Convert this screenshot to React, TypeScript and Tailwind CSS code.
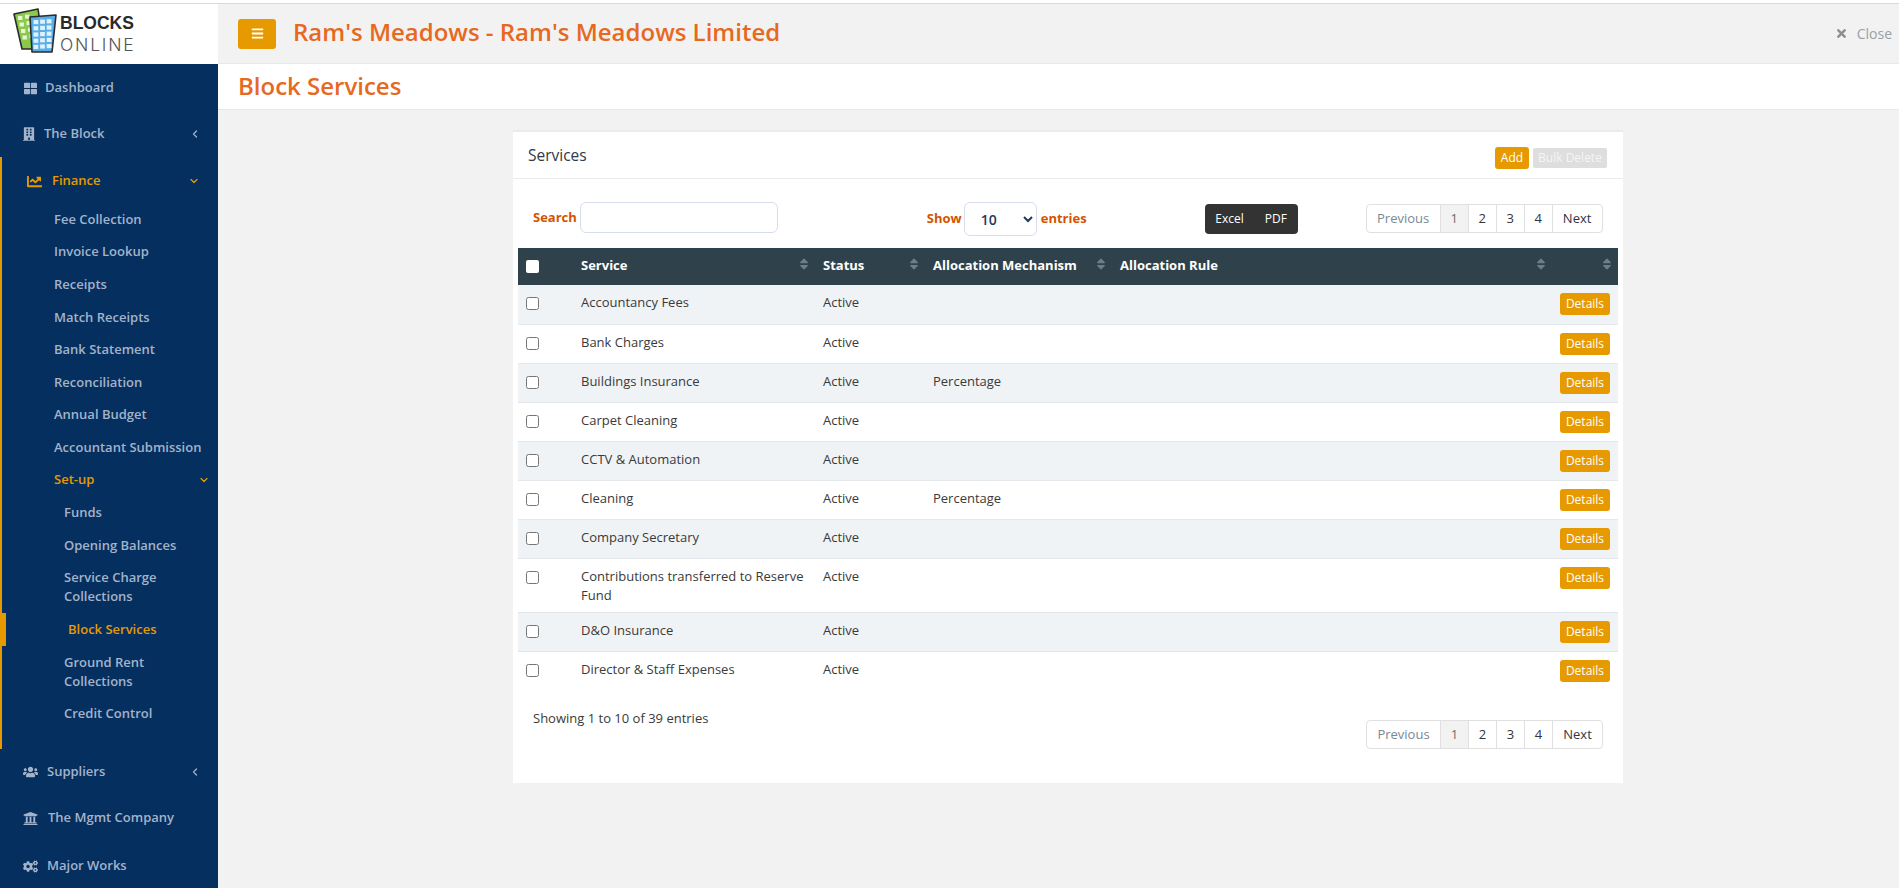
import React from "react";
import { FaThLarge, FaBuilding, FaChartLine, FaUsers, FaUniversity, FaCogs, FaTimes, FaBars, FaSort } from "react-icons/fa";
import { ChevronLeft, ChevronDown } from "lucide-react";

const font = { fontFamily: '"Open Sans", "Liberation Sans", sans-serif' };

function Logo() {
  return (
    <div className="flex items-center h-[60px] w-[218px] bg-white pl-[13px]">
      <svg width="46" height="46" viewBox="0 0 46 46" className="shrink-0 mb-[6px]">
        <polygon points="1,6 25,1 27,14 20,41 9,41" fill="#8bc94a" stroke="#2b2b2b" strokeWidth="1.6" strokeLinejoin="round" />
        {[0, 1, 2, 3].map((r) => [0, 1].map((c) => (
          <rect key={`g${r}${c}`} x={5 + c * 7 + r * 1.5} y={8 - c * 1.4 + r * 6.5} width="4.4" height="4" fill="#e6f5d5" />
        )))}
        <polygon points="17,9 43,7 39,44 19,44" fill="#58aee8" stroke="#2b2b2b" strokeWidth="1.6" strokeLinejoin="round" />
        {[0, 1, 2, 3, 4].map((r) => [0, 1, 2].map((c) => (
          <rect key={`b${r}${c}`} x={20.5 + c * 6.6} y={12 - c * 0.4 + r * 6.2} width="4.8" height="4.2" fill="#dff1fc" />
        )))}
      </svg>
      <div className="ml-[1px] flex flex-col">
        <span className="text-[17.5px] leading-[21.5px] font-bold text-[#2a2a2a]" style={{ fontFamily: '"Liberation Sans", sans-serif' }}>BLOCKS</span>
        <span className="text-[17.5px] leading-[21.5px] font-light text-[#555] tracking-[1.8px]" style={{ fontFamily: 'Inter, sans-serif' }}>ONLINE</span>
      </div>
    </div>
  );
}

function Top({ icon, label, arrow, gap, extra }: { icon: React.ReactNode; label: string; arrow?: boolean; gap: string; extra: string }) {
  return (
    <div className={`flex items-center h-[46px] pl-[23px] pr-[17px] text-[13px] font-semibold text-[#a3b3ca] ${extra}`}>
      <span className={`flex items-center justify-center ${gap}`}>{icon}</span>
      <span>{label}</span>
      {arrow && <ChevronLeft size={12} strokeWidth={2.5} className="ml-auto" />}
    </div>
  );
}

function Sub({ label, indent, two }: { label: string; indent?: boolean; two?: boolean }) {
  return (
    <div className={`flex items-center text-[13px] leading-[19px] font-semibold text-[#a3b3ca] ${indent ? "pl-[62px] pr-[36px]" : "pl-[52px]"} ${two ? "h-[51.6px]" : "h-[32.6px]"}`}>
      <span>{label}</span>
    </div>
  );
}

function Sidebar() {
  return (
    <aside className="w-[218px] shrink-0 bg-[#052f5f] flex flex-col">
      <Top label="Dashboard" extra="pt-[2px]" gap="w-[14px] mr-[8px]" icon={<FaThLarge className="text-[13px]" />} />
      <Top label="The Block" extra="pt-[2px]" arrow gap="w-[12px] mr-[9px]" icon={<FaBuilding className="text-[14px]" />} />
      <div className="h-[592px] border-l-2 border-[#e69a00] mt-[1px]">
        <div className="flex items-center h-[46px] pt-[2px] pl-[25px] pr-[18px] text-[13px] font-semibold text-[#e69a00]">
          <FaChartLine className="text-[15px] mr-[10px]" />
          <span>Finance</span>
          <ChevronDown size={12} strokeWidth={2.5} className="ml-auto" />
        </div>
        <Sub label="Fee Collection" />
        <Sub label="Invoice Lookup" />
        <Sub label="Receipts" />
        <Sub label="Match Receipts" />
        <Sub label="Bank Statement" />
        <Sub label="Reconciliation" />
        <Sub label="Annual Budget" />
        <Sub label="Accountant Submission" />
        <div className="flex items-center h-[32.6px] pl-[52px] pr-[8px] text-[13px] font-semibold text-[#e69a00]">
          <span>Set-up</span>
          <ChevronDown size={12} strokeWidth={2.5} className="ml-auto" />
        </div>
        <Sub label="Funds" indent />
        <Sub label="Opening Balances" indent />
        <Sub label="Service Charge Collections" indent two />
        <div className="flex items-center h-[32.6px] -ml-[2px] pl-[62px] border-l-[6px] border-[#e69a00] text-[13px] font-semibold text-[#e69a00]">
          Block Services
        </div>
        <Sub label="Ground Rent Collections" indent two />
        <Sub label="Credit Control" indent />
      </div>
      <Top label="Suppliers" extra="" arrow gap="w-[15px] mr-[9px]" icon={<FaUsers className="text-[16px]" />} />
      <Top label="The Mgmt Company" extra="" gap="w-[15px] mr-[10px]" icon={<FaUniversity className="text-[15px]" />} />
      <Top label="Major Works" extra="pt-[4px]" gap="w-[15px] mr-[9px]" icon={<FaCogs className="text-[15px]" />} />
    </aside>
  );
}

function Pager() {
  const cell = "flex items-center justify-center h-full border-l border-[#e0e0e0] text-[13px]";
  return (
    <div className="flex h-[29px] w-[237px] border border-[#e0e0e0] rounded-[4px] overflow-hidden bg-white text-[#334]">
      <div className="flex items-center justify-center w-[73px] text-[13px] text-[#7b8794]">Previous</div>
      <div className={`${cell} w-[28px] bg-[#f2f2f2] text-[#6b6b6b]`}>1</div>
      <div className={`${cell} w-[28px]`}>2</div>
      <div className={`${cell} w-[28px]`}>3</div>
      <div className={`${cell} w-[28px]`}>4</div>
      <div className={`${cell} flex-1`}>Next</div>
    </div>
  );
}

const rows: [string, string][] = [
  ["Accountancy Fees", ""],
  ["Bank Charges", ""],
  ["Buildings Insurance", "Percentage"],
  ["Carpet Cleaning", ""],
  ["CCTV & Automation", ""],
  ["Cleaning", "Percentage"],
  ["Company Secretary", ""],
  ["Contributions transferred to Reserve Fund", ""],
  ["D&O Insurance", ""],
  ["Director & Staff Expenses", ""],
];

function Th({ label }: { label?: string }) {
  return (
    <th className="relative text-left font-bold text-white text-[13px] pl-[8px] pb-[2px] align-middle">
      {label}
      <FaSort className="absolute right-[4px] top-[9px] text-[14px] text-[#6f7e85]" />
    </th>
  );
}

function Table() {
  return (
    <table className="w-[1100px] table-fixed border-collapse ml-[5px]">
      <colgroup>
        <col className="w-[55px]" />
        <col className="w-[242px]" />
        <col className="w-[110px]" />
        <col className="w-[187px]" />
        <col className="w-[440px]" />
        <col className="w-[66px]" />
      </colgroup>
      <thead>
        <tr className="h-[37px] bg-[#2f424b]">
          <th className="text-left pl-[8px] align-middle">
            <input type="checkbox" readOnly className="block w-[13px] h-[13px] appearance-none bg-white rounded-[2px]" />
          </th>
          <Th label="Service" />
          <Th label="Status" />
          <Th label="Allocation Mechanism" />
          <Th label="Allocation Rule" />
          <Th />
        </tr>
      </thead>
      <tbody>
        {rows.map(([name, mech], i) => (
          <tr key={name} className={`border-b border-[#e3e7ec] text-[13px] leading-[19px] text-[#3a3a3a] ${i === 9 ? "border-b-0" : ""} ${i % 2 === 0 ? "bg-[#f0f3f6]" : "bg-white"} ${name.startsWith("Contrib") ? "h-[54px]" : "h-[39px]"}`}>
            <td className="align-top pl-[8px] pt-[12px]">
              <input type="checkbox" readOnly className="block w-[13px] h-[13px]" />
            </td>
            <td className="align-top pl-[8px] pr-[8px] pt-[8px]">{name}</td>
            <td className="align-top pl-[8px] pt-[8px]">Active</td>
            <td className="align-top pl-[8px] pt-[8px]">{mech}</td>
            <td />
            <td className="align-top pt-[8px] pr-[8px]">
              <div className="flex justify-end">
                <button className="h-[22px] w-[50px] rounded-[3px] bg-[#e69a00] text-white text-[12px] leading-[22px]">Details</button>
              </div>
            </td>
          </tr>
        ))}
      </tbody>
    </table>
  );
}

function Card() {
  return (
    <section className="w-[1110px] h-[653px] bg-white border-t-2 border-[#ebebeb] ml-[295px] mt-[20px]">
      <div className="flex items-center h-[47px] pt-[2px] border-b border-[#e9ecef] pl-[15px] pr-[16px]">
        <span className="text-[15.5px] font-medium text-[#2f3a45]">Services</span>
        <button className="ml-auto h-[22px] w-[34px] rounded-[3px] bg-[#e69a00] text-white text-[12px] mt-[3px]">Add</button>
        <button className="ml-[4px] h-[20px] w-[74px] rounded-[2px] bg-[#dedede] text-[#f5f5f5] text-[12px] mt-[3px]">Bulk Delete</button>
      </div>
      <div className="flex items-start h-[69px] pt-[23px]">
        <div className="flex items-center ml-[20px]">
          <span className="text-[13px] font-bold text-[#d35400] mr-[3px]">Search</span>
          <input className="w-[198px] h-[31px] border border-[#d5deea] rounded-[6px] bg-white outline-none" />
        </div>
        <div className="flex items-center ml-[149px]">
          <span className="text-[13px] font-bold text-[#d35400] mr-[2px]">Show</span>
          <select defaultValue="10" className="w-[73px] h-[34px] border border-[#d5deea] rounded-[6px] bg-white pl-[12px] text-[14px] font-semibold text-[#1f3a5a] outline-none">
            <option>10</option>
          </select>
          <span className="text-[13px] font-bold text-[#d35400] ml-[4px]">entries</span>
        </div>
        <div className="flex items-center justify-center gap-[21px] ml-[118px] mt-[2px] w-[93px] h-[30px] rounded-[4px] bg-[#333] text-white text-[12px]">
          <span>Excel</span>
          <span>PDF</span>
        </div>
        <div className="ml-[68px] mt-[2px]"><Pager /></div>
      </div>
      <Table />
      <div className="flex justify-between mt-[19px]">
        <span className="ml-[20px] text-[13px] text-[#3a3a3a]">Showing 1 to 10 of 39 entries</span>
        <div className="mr-[20px] mt-[11px]"><Pager /></div>
      </div>
    </section>
  );
}

export default function App() {
  return (
    <div className="w-[1899px] h-[888px] overflow-hidden bg-[#f2f2f2] flex flex-col" style={font}>
      <div className="h-[4px] bg-white border-b border-[#d9d9d9] shrink-0" />
      <div className="flex h-[60px] shrink-0">
        <Logo />
        <div className="flex-1 flex items-center pl-[20px] pr-[7px] border-b border-[#e6e8ec]">
          <button className="w-[38px] h-[30px] rounded-[3px] bg-[#e69a00] flex items-center justify-center text-white text-[13px]"><FaBars /></button>
          <h1 className="ml-[17px] mb-[4px] text-[24px] font-semibold text-[#e6691f]">Ram's Meadows - Ram's Meadows Limited</h1>
          <div className="ml-auto flex items-center text-[14px] text-[#9aa0a6]">
            <FaTimes className="text-[13px] mr-[9px] text-[#8b8f94]" />
            <span>Close</span>
          </div>
        </div>
      </div>
      <div className="flex flex-1 min-h-0">
        <Sidebar />
        <main className="flex-1 min-w-0">
          <div className="h-[46px] bg-white border-b border-[#e6e8ec] pl-[20px] flex items-center">
            <h2 className="text-[24px] mb-[2px] font-semibold text-[#e6691f]">Block Services</h2>
          </div>
          <Card />
        </main>
      </div>
    </div>
  );
}
